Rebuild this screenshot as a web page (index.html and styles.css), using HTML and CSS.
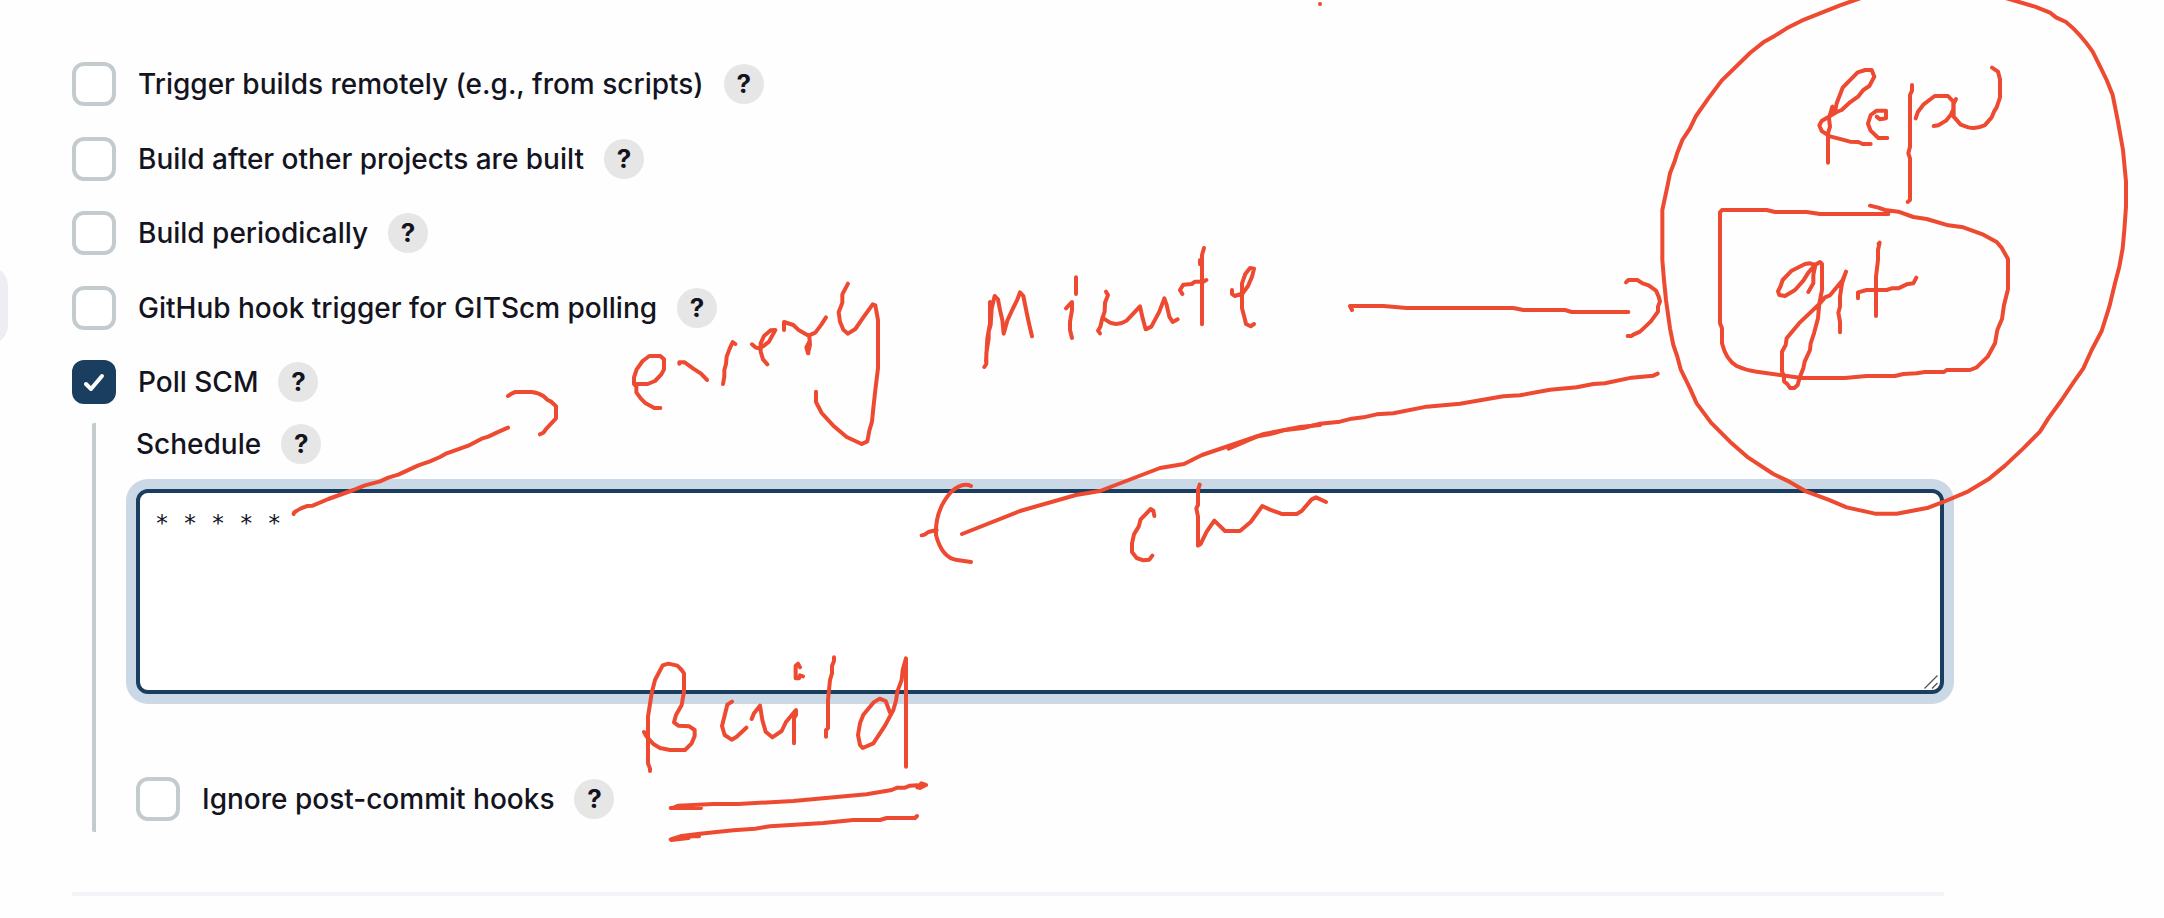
FILE: index.html
```html
<!DOCTYPE html>
<html lang="en">
<head>
<meta charset="utf-8">
<title>Build Triggers</title>
<link rel="stylesheet" href="styles.css">
</head>
<body>
<div class="side-item"></div>
<main class="triggers">
  <div class="row"><span class="box"></span><span class="label l1">Trigger builds remotely (e.g., from scripts)</span><span class="help">?</span></div>
  <div class="row"><span class="box"></span><span class="label l2">Build after other projects are built</span><span class="help">?</span></div>
  <div class="row"><span class="box"></span><span class="label l3">Build periodically</span><span class="help">?</span></div>
  <div class="row"><span class="box"></span><span class="label l4">GitHub hook trigger for GITScm polling</span><span class="help">?</span></div>
  <div class="row"><span class="box checked"><svg viewBox="0 0 44 44" width="44" height="44"><path d="M14 24l5 5L30 16"/></svg></span><span class="label l5">Poll SCM</span><span class="help">?</span></div>
  <section class="nested">
    <div class="schedule"><span class="label l6">Schedule</span><span class="help">?</span></div>
    <div class="cron">* * * * *<svg class="grip" viewBox="0 0 14 14" width="14" height="14"><path d="M.5 13.5L13.5.5M8 13.5L13.5 8"/></svg></div>
    <div class="row ignore"><span class="box"></span><span class="label l7">Ignore post-commit hooks</span><span class="help">?</span></div>
  </section>
  <hr class="divider">
</main>
<svg class="ink" viewBox="0 0 2164 918" width="2164" height="918">
  <!-- arrow from the cron expression -->
  <g transform="translate(280 360) scale(.33333)">
    <path d="M41 462L42 458Q60 444 82 438L98 437L145 417L220 390L255 376L300 364L325 353L355 344L415 316L450 304L480 291L500 280L565 257L605 236L625 230L650 218L684 203"/>
    <path d="M684 108Q694 100 706 96H755Q775 98 790 108L803 120L812 124L828 139V175L800 205L790 218L780 223"/>
  </g>
  <!-- every -->
  <g transform="translate(600 230) scale(.33333)">
    <path d="M103 462H143L165 453L184 433L192 418V388L181 378H148L128 393L110 418L102 442V462L109 470V487L122 505L137 520L163 534H181"/>
    <path d="M238 401V397H254L280 416L303 431L321 450M369 462L373 440V420L378 402L380 380L389 356L398 336L406 342M456 343L466 352L477 355L492 347L507 335L526 300L512 301L492 318L482 340V365L489 388L502 403"/>
    <path d="M552 300V276L580 285L597 301L626 317L646 308L664 284L678 262M628 318L630 345L624 370L619 352L628 335L625 370"/>
    <path d="M744 161L727 193V218L716 247L720 275L730 299L744 311L766 297L790 262L818 223L826 226L834 270V415L826 480L820 535L816 575L808 602L802 634L785 642L740 621L700 587L665 549L648 516V485"/>
  </g>
  <!-- minute, chm and the return arrow -->
  <g transform="translate(960 230) scale(.33333)">
    <path d="M73 411L79 402V370L86 325V305L92 285L96 220M90 216V280L82 325L78 395M94 240L104 198L114 208L120 240L127 270L131 311L142 272L158 237L172 209L180 187L190 198L200 248L208 285L216 319"/>
    <path d="M348 142V192M318 235L336 216V240L330 275V300L336 324M438 185L444 195L435 218L434 245L427 265L421 290L414 302L420 310M427 263L450 278Q475 288 500 272L540 229L548 265L557 298L574 290L598 245L613 205L620 225L628 260L638 276L653 268"/>
    <path d="M667 192L660 180L670 164L695 162L705 155H730L739 150M732 54L726 75V283M720 90V103M816 180V192L824 198L848 190L864 168L876 140L882 116L870 114L856 132L846 160V235L854 265L858 282L872 289L882 282"/>
    <path d="M583 858L580 842L572 837L542 868L536 890L522 913L516 940V966L530 984L550 991L568 989L577 977M719 764L714 780V825L709 835L714 860V947L722 942L740 905L763 872L795 903H840L872 876L907 828L930 839L965 852H1010L1025 843L1055 808L1068 802L1098 816"/>
    <path d="M-115 916L-106 914L-95 906L-70 900"/>
  </g>
  <path d="M962 534L1020 511L1076 495L1100 491L1160 468L1184 464L1202 455L1264 434L1300 427L1320 425"/>
  <path d="M971 486Q962 482 951 492Q935 510 936 535Q942 558 957 560L971 562"/>
  <!-- link between the job and the repository -->
  <g transform="translate(1260 0) scale(.33333)">
    <path class="dot" d="M180 12h.1"/>
    <path d="M276 930L270 918H370L440 924H760L790 930H915L935 936H1105"/>
    <path d="M1098 847L1105 840H1132L1148 850L1166 856L1188 872L1196 890L1200 904L1194 920V935L1172 965L1140 995L1120 1004L1115 1008H1103"/>
    <path d="M-94 1346L-10 1310L40 1300L70 1291L130 1284L180 1271L240 1265L275 1256L310 1252L350 1243L400 1240L500 1220L600 1211L730 1189L780 1186L870 1169L950 1162L1000 1152L1035 1150L1115 1133L1180 1127L1193 1121"/>
  </g>
  <!-- repository sketch -->
  <g transform="translate(1640 0) scale(.33333)">
    <path d="M660 -5L600 16L485 62L440 85L405 107L370 127L330 159L245 242L205 295L168 348L150 385L127 420L112 458L103 487L90 520L82 560L67 630V780L72 840L78 900L90 985L100 1035L112 1070L122 1108L150 1165L170 1210L213 1268L270 1325L325 1373L400 1422L440 1441L500 1475L565 1499L620 1522L705 1541H770L865 1523L910 1506L985 1474L1045 1438L1095 1397L1150 1345L1200 1295L1225 1255L1265 1200L1300 1148L1330 1105L1355 1050L1385 993L1408 920L1425 850L1438 800L1448 745L1453 690L1458 620V545L1449 450L1433 360L1418 285L1400 240L1383 205L1358 155Q1320 100 1278 66L1248 52L1230 38L1185 20L1100 -5"/>
    <path d="M692 432H668L655 426L630 425L605 418L570 409L545 393L538 376L545 363L590 336L605 330L630 307L654 290L670 270L688 258L703 230L695 210H676L653 217L608 263L590 310L585 335L577 320L567 355L570 380L564 400V488"/>
    <path d="M710 350L720 358L738 355V332H710L692 345L684 371L692 392L715 414H742M816 255V272L810 285V440L805 460L810 475V600L803 606M827 355L834 335L850 314L884 288H924L940 305V328L932 345L918 362L895 376L881 378M948 297L941 312V350L962 374L985 382Q1010 388 1034 376L1055 352L1062 335L1070 322L1080 292V238L1074 215L1056 203"/>
    <path d="M745 642H540L500 636H405L380 630H246L240 637V970L246 985V1030Q258 1080 290 1098Q320 1112 350 1115L485 1134H615L680 1128H765L790 1122L830 1120L855 1116H912L920 1110H990L1010 1102L1043 1070L1065 1030L1072 990L1086 957L1092 915L1104 868V777L1084 742L1070 726L1030 704L970 682L925 676L860 657L820 651L775 635L735 630L715 623L690 617"/>
    <path d="M505 876L520 850V825L526 795L510 790L495 792L455 812L428 840L422 858L414 874L418 885L435 888L465 870L490 842L505 818L525 795L540 786L546 792V870L538 910L534 955L522 1000L512 1030L510 1050L494 1085L490 1105L480 1130L473 1155L463 1164H450L442 1152L432 1144V1128L426 1115V1055L437 1035L440 1015L480 967L538 912L555 892L570 886L608 840L618 815L606 850L600 890V920L595 938L600 965V997"/>
    <path d="M716 731L719 728L714 750V780L708 830V948M654 995V977L680 870H740"  class="hidden"/>
    <path d="M716 731L719 728L714 750V780L708 830V948M654 895V877L680 870H740L755 865H775L800 853L820 850L829 833"/>
  </g>
  <!-- build, underlined twice -->
  <g transform="translate(620 620) scale(.33333)">
    <path d="M72 336L80 350L100 372L120 384L150 390H195L215 370L224 348V330L208 319L175 317L162 307L168 285L185 255L192 215V160L185 150L172 137L145 131L128 136L105 180L95 220L84 290V430L90 446V453M336 245L322 254L313 290L306 318L314 345L335 359L350 350L379 323"/>
    <path d="M395 297L402 280L420 257L427 300L437 335L457 352L485 333L498 306L528 270V285L522 295V370M540 142L534 131L527 137V175H537L540 166L549 169M642 112V123L636 138V160L630 180L624 240V325L618 330V350M810 278L797 243L779 236L760 248L730 284L720 310L714 345L720 375L728 384L760 370L795 317L820 270L828 242L832 215L845 180L848 150L858 115V440"/>
    <path d="M152 564H243M158 564L175 557L280 552H355L520 543L650 531L740 523L815 510L832 503H855L870 497L892 496L900 504L918 495L904 490L892 502M152 658L185 648L240 641L340 631L405 626L450 619L610 609L700 600H780L800 594H885L891 588M154 660L205 654L210 649H237"/>
  </g>
</svg>
</body>
</html>
```
FILE: styles.css
```css
* { box-sizing: border-box; }

body {
  margin: 0;
  width: 2164px;
  height: 918px;
  position: relative;
  overflow: hidden;
  background: #fefefe;
  color: #14141f;
  font: 500 28px/44px Inter, "Liberation Sans", sans-serif;
}

.side-item {
  position: absolute;
  left: -40px;
  top: 266px;
  width: 48px;
  height: 79px;
  border-radius: 20px;
  background: #ededf3;
}

.triggers {
  width: 1944px;
  padding: 62px 0 0 72px;
}

.row {
  display: flex;
  align-items: center;
  height: 44px;
  margin-bottom: 30.5px;
}

.box {
  width: 44px;
  height: 44px;
  margin-right: 22px;
  flex: none;
  border: 4px solid #c3cbcf;
  border-radius: 12px;
  background: #fff;
}

.box.checked {
  border: 0;
  background: #1a3e5f;
}

.box svg { display: block; }

.box path {
  fill: none;
  stroke: #fff;
  stroke-width: 4;
  stroke-linecap: round;
  stroke-linejoin: round;
}

.label {
  white-space: nowrap;
  margin-right: 20px;
}

.help {
  width: 40px;
  height: 40px;
  flex: none;
  border-radius: 50%;
  background: #e6e6e6;
  font-size: 26px;
  font-weight: 700;
  line-height: 40px;
  text-align: center;
}

.nested {
  margin: -11.5px 0 0 20px;
  padding-left: 40px;
  height: 409px;
  border-left: 4px solid #c3cbcf;
  border-radius: 2px;
}

.schedule {
  display: flex;
  align-items: center;
  height: 42px;
}

.cron {
  position: relative;
  height: 205px;
  margin-top: 24px;
  padding: 13px 15px;
  border: 4px solid #1a3e5f;
  border-radius: 12px;
  background: #fff;
  box-shadow: 0 0 0 10px #cbd8e5;
  font: 23.3px/34px "DejaVu Sans Mono", monospace;
}

.grip {
  position: absolute;
  right: 2px;
  bottom: 1px;
  fill: none;
  stroke: #555;
  stroke-width: 1.3;
}

.ignore { margin: 83px 0 0; }

.divider {
  height: 4px;
  margin: 60px 0 0;
  border: 0;
  background: #f3f3f8;
}

.ink {
  position: absolute;
  left: 0;
  top: 0;
  fill: none;
  stroke: #ed4a31;
  stroke-width: 4;
  stroke-linecap: round;
  stroke-linejoin: round;
}

.ink g { stroke-width: 12; }
.ink .hidden { display: none; }
```
